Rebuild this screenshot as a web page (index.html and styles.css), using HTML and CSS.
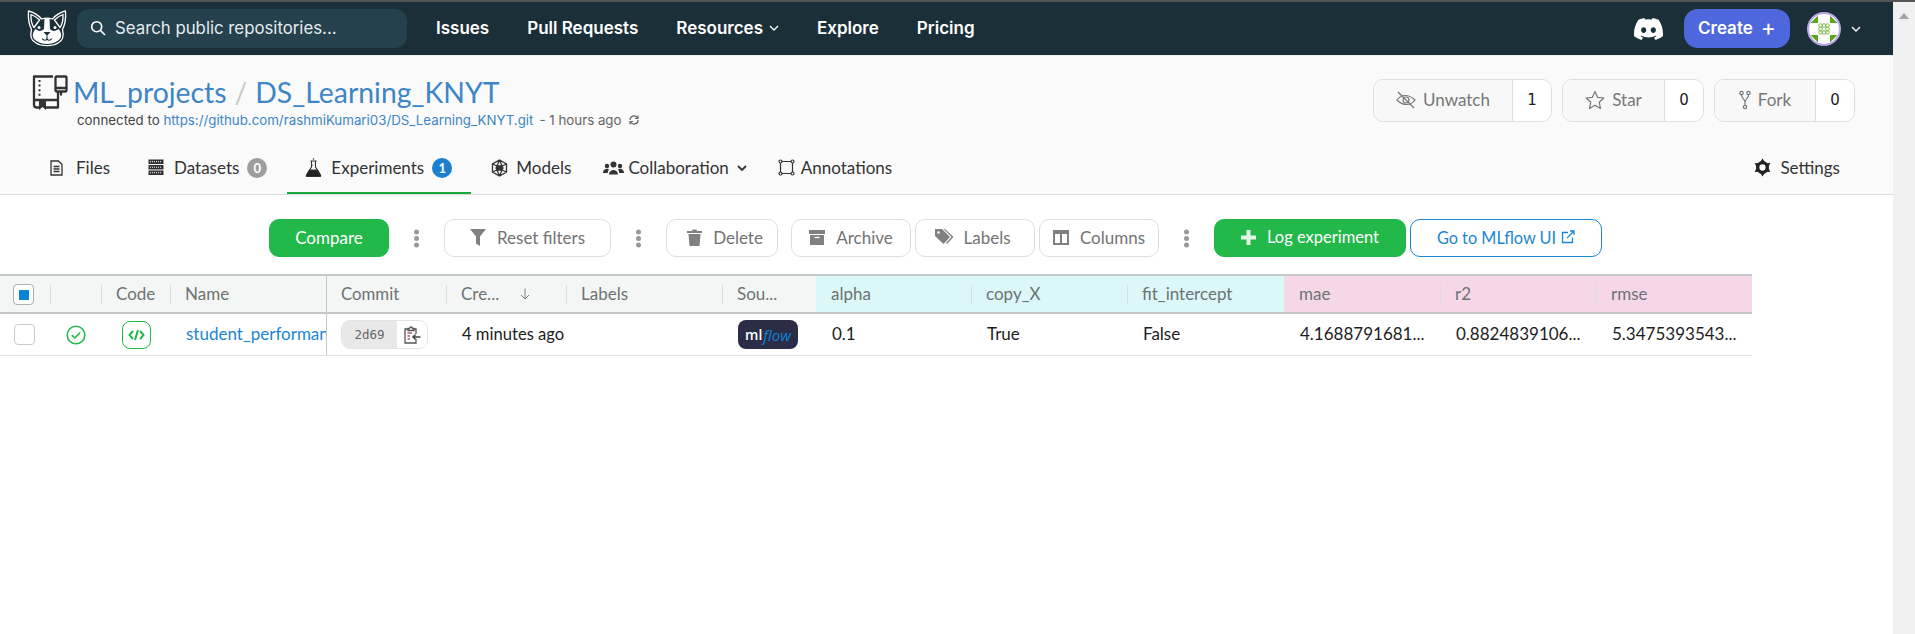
FILE: index.html
```html
<!DOCTYPE html>
<html lang="en-US">
  <head>
    <title>DS_Learning_KNYT - Experiments</title>
    <link rel="stylesheet" href="styles.css">
  </head>
  <body>
    <div id="page">
      <div id="main">
        <nav id="topbar">
          <svg class="logo" viewBox="0 0 40 37" fill="none" stroke="#fff" stroke-width="1.300" stroke-linejoin="round">
            <path d="M1.500 1 C1 8 1.500 14 4.500 19.500 C2.500 27 5 31 9 33 C14 36.500 26 36.500 31 33 C35 31 37.500 27 35.500 19.500 C38.500 14 39 8 38.500 1 C34 2 29 5 25.500 9 C22 8 18 8 14.500 9 C11 5 6 2 1.500 1 Z"/>
            <path d="M4 4.500 C7 5.500 10 7.500 12.500 10 L7 17.500 C4.500 14 3.800 9 4 4.500 Z M36 4.500 C33 5.500 30 7.500 27.500 10 L33 17.500 C35.500 14 36.200 9 36 4.500 Z"/>
            <path d="M17.500 8.500 H22.500 L23 19 C26 22 29 21 31.500 19 C35 23 35.500 28 30.500 31 C25 35 15 35 9.500 31 C4.500 28 5 23 8.500 19 C11 21 14 22 17 19 Z" fill="#fff" stroke="none"/>
            <circle cx="12" cy="17.500" r="1.500" fill="#fff" stroke="none"/>
            <circle cx="28" cy="17.500" r="1.500" fill="#fff" stroke="none"/>
            <path d="M16.500 22 H23.500 L20 26 Z" fill="#1b2f38" stroke="none"/>
            <path d="M20 26 V28.500 M15 28.500 C17 31 19.500 30.500 20 28.500 C20.500 30.500 23 31 25 28.500" stroke="#1b2f38" stroke-width="1.100"/>
          </svg>
          <div class="search">
            <svg class="search-icon" viewBox="0 0 16 16" fill="none" stroke="#fff" stroke-width="1.600"><circle cx="6.700" cy="6.700" r="5"/><path d="M10.400 10.400 L15 15"/></svg>
            <span>Search public repositories...</span>
          </div>
          <a class="nav-link">Issues</a>
          <a class="nav-link">Pull Requests</a>
          <a class="nav-link">Resources <svg class="chev" viewBox="0 0 10 6" fill="none" stroke="#fff" stroke-width="1.300"><path d="M1 1 L5 5 L9 1"/></svg></a>
          <a class="nav-link">Explore</a>
          <a class="nav-link">Pricing</a>
          <div class="top-right">
            <svg class="discord" viewBox="0 0 127.140 96.360"><path fill="#fff" d="M107.700 8.070A105.150 105.150 0 0 0 81.470 0a72.060 72.060 0 0 0-3.360 6.830 97.680 97.680 0 0 0-29.110 0A72.370 72.370 0 0 0 45.640 0a105.890 105.890 0 0 0-26.250 8.090C2.790 32.650-1.710 56.600.54 80.210a105.730 105.730 0 0 0 32.170 16.150 77.700 77.700 0 0 0 6.890-11.110 68.420 68.420 0 0 1-10.850-5.180c.91-.66 1.800-1.340 2.660-2a75.570 75.570 0 0 0 64.320 0c.87.710 1.760 1.390 2.660 2a68.680 68.680 0 0 1-10.870 5.190 77 77 0 0 0 6.890 11.100 105.250 105.250 0 0 0 32.190-16.140c2.640-27.380-4.510-51.110-18.900-72.150ZM42.450 65.690C36.180 65.690 31 60 31 53s5-12.740 11.430-12.740S54 46 53.890 53s-5.050 12.690-11.440 12.690Zm42.240 0C78.410 65.690 73.250 60 73.250 53s5-12.740 11.440-12.740S96.230 46 96.120 53s-5.040 12.690-11.430 12.690Z"/></svg>
            <a class="create">Create <span class="create-plus">+</span></a>
            <div class="avatar">
              <svg viewBox="0 0 30 30"><path d="M1.500 9 L9 1.500 V9 Z M28.500 9 L21 1.500 V9 Z M1.500 21 L9 28.500 V21 Z M28.500 21 L21 28.500 V21 Z" fill="#5aa51e"/><g fill="none" stroke="#78bb3e" stroke-width="1"><circle cx="11.500" cy="11.500" r="1.800"/><circle cx="15" cy="11.500" r="1.800"/><circle cx="18.500" cy="11.500" r="1.800"/><circle cx="11.500" cy="15" r="1.800"/><circle cx="18.500" cy="15" r="1.800"/><circle cx="11.500" cy="18.500" r="1.800"/><circle cx="15" cy="18.500" r="1.800"/><circle cx="18.500" cy="18.500" r="1.800"/></g></svg>
            </div>
            <svg class="chev user-chev" viewBox="0 0 10 6" fill="none" stroke="#fff" stroke-width="1.300"><path d="M1 1 L5 5 L9 1"/></svg>
          </div>
        </nav>

        <header id="repo">
          <div class="repo-top">
            <div class="repo-info">
              <div class="repo-title">
                <svg class="repo-icon" viewBox="0 0 36 35" fill="none" stroke="#333" stroke-width="2.300" stroke-linejoin="round">
                  <path d="M21 1.500 H2 V30 C2 32 3 32.500 5 32.500 H7 M14 32.500 H26 V25 H2 M26 25 V17"/>
                  <path d="M7.500 5 V22" stroke-dasharray="2 2.600" stroke-width="2"/>
                  <rect x="23.500" y="1.500" width="11" height="15" rx="1"/>
                  <path d="M23.500 13 H34.500 M29 17 V20.500"/>
                  <path d="M7 25 H14 V35 L10.500 32 L7 35 Z" fill="#333" stroke="none"/>
                </svg>
                <a class="owner">ML_projects</a>
                <span class="slash">/</span>
                <a class="reponame">DS_Learning_KNYT</a>
              </div>
              <div class="connected">
                <span>connected to&nbsp;</span><a>https://github.com/rashmiKumari03/DS_Learning_KNYT.git</a>
                <span class="ago">- 1 hours ago</span>
                <svg class="sync" viewBox="0 0 12 12" fill="none" stroke="#666" stroke-width="1.200"><path d="M2 6 A4 4 0 0 1 9.500 4 M10 6 A4 4 0 0 1 2.500 8"/><path d="M10 1.500 V4.500 H7 M2 10.500 V7.500 H5"/></svg>
              </div>
            </div>
            <div class="repo-actions">
              <div class="counter-btn">
                <span class="counter-label w-watch">
                  <svg viewBox="0 0 20 20" fill="none" stroke="#777" stroke-width="1.200"><path d="M1 10 C5 4 13 4 19 10 C15 16 7 16 1 10 Z"/><circle cx="10" cy="10" r="3"/><path d="M2 2 L18 18"/></svg>
                  Unwatch</span>
                <span class="counter-num">1</span>
              </div>
              <div class="counter-btn">
                <span class="counter-label w-star">
                  <svg viewBox="0 0 20 20" fill="none" stroke="#777" stroke-width="1.200" stroke-linejoin="round"><path d="M10 1.500 L12.600 7.300 L18.800 8 L14.200 12.200 L15.500 18.400 L10 15.200 L4.500 18.400 L5.800 12.200 L1.200 8 L7.400 7.300 Z"/></svg>
                  Star</span>
                <span class="counter-num">0</span>
              </div>
              <div class="counter-btn fork-btn">
                <span class="counter-label w-fork">
                  <svg viewBox="0 0 12 20" fill="none" stroke="#777" stroke-width="1.200"><circle cx="2.500" cy="3" r="1.700"/><circle cx="9.500" cy="3" r="1.700"/><circle cx="6" cy="17" r="1.700"/><path d="M2.500 5 C2.500 9 6 9 6 12 V15 M9.500 5 C9.500 9 6 9 6 12"/></svg>
                  Fork</span>
                <span class="counter-num">0</span>
              </div>
            </div>
          </div>

          <div class="tabs">
            <a class="tab t-files">
              <svg class="tab-icon" width="13" height="16" viewBox="0 0 13 16" fill="none" stroke="#333" stroke-width="1.300"><path d="M1 1 H8.500 L12 4.500 V15 H1 Z M3.500 6.500 H9.500 M3.500 9 H9.500 M3.500 11.500 H9.500"/></svg>
              Files</a>
            <a class="tab t-datasets">
              <svg class="tab-icon" width="16" height="17" viewBox="0 0 16 17" fill="#333"><rect x="0.500" y="0.500" width="15" height="4.500"/><rect x="0.500" y="6" width="15" height="4.500"/><rect x="0.500" y="11.500" width="15" height="4.500"/><path d="M2 2.700 H14 M2 8.200 H14 M2 13.700 H14" stroke="#fff" stroke-width="1" stroke-dasharray="1 1"/></svg>
              Datasets <span class="badge grey">0</span></a>
            <a class="tab t-exp active">
              <svg class="tab-icon" width="17" height="19" viewBox="0 0 17 19" fill="none" stroke="#333" stroke-width="1.100"><path d="M5.500 3 H11.500 M6.500 3 V9 L1.500 17 C1 18 1.500 18.500 2.500 18.500 H14.500 C15.500 18.500 16 18 15.500 17 L10.500 9 V3"/><path d="M4.500 12 H12.500 L15.500 17.500 C15.500 18 15 18.500 14.500 18.500 H2.500 C2 18.500 1.500 18 1.500 17.500 Z" fill="#222"/><circle cx="8.500" cy="1" r="0.800" fill="#333" stroke="none"/><circle cx="7.800" cy="7" r="0.600" fill="#333" stroke="none"/></svg>
              Experiments <span class="badge blue">1</span></a>
            <a class="tab t-models">
              <svg class="tab-icon" width="17" height="18" viewBox="0 0 17 18" fill="none" stroke="#333" stroke-width="1.300"><path d="M8.500 1 L15.500 5 V13 L8.500 17 L1.500 13 V5 Z M1.500 5 L6 7 M15.500 5 L11 7 M1.500 13 L6 11 M15.500 13 L11 11 M8.500 1 L6 7 M8.500 1 L11 7 M8.500 17 L6 11 M8.500 17 L11 11"/><path d="M6 7 H11 L12 9 L11 11 H6 L5 9 Z" fill="#333"/></svg>
              Models</a>
            <a class="tab t-collab">
              <svg class="tab-icon" width="21" height="14" viewBox="0 0 21 14" fill="#333"><circle cx="10.500" cy="3.500" r="3"/><circle cx="4" cy="5" r="2.200"/><circle cx="17" cy="5" r="2.200"/><path d="M6 13.500 C6 7.500 15 7.500 15 13.500 Z M0 12 C0 7.500 5 7 6 8.500 C5 10 4.800 11 4.800 12 Z M21 12 C21 7.500 16 7 15 8.500 C16 10 16.200 11 16.200 12 Z"/></svg>
              Collaboration <svg class="chev dark" viewBox="0 0 10 6" fill="none" stroke="#333" stroke-width="1.800"><path d="M1 1 L5 5 L9 1"/></svg></a>
            <a class="tab t-annot">
              <svg class="tab-icon" width="17" height="17" viewBox="0 0 17 17" fill="none" stroke="#333" stroke-width="1.200"><path d="M2.500 2.500 H14.500 V14.500 H2.500 Z"/><g fill="#fafafa"><circle cx="2.500" cy="2.500" r="1.500"/><circle cx="14.500" cy="2.500" r="1.500"/><circle cx="2.500" cy="14.500" r="1.500"/><circle cx="14.500" cy="14.500" r="1.500"/></g></svg>
              Annotations</a>
            <a class="tab t-settings">
              <svg class="tab-icon" width="19" height="19" viewBox="0 0 17 17"><circle cx="8.500" cy="8.500" r="4.300" fill="none" stroke="#222" stroke-width="3"/><path d="M8.500 0.500 L10.500 3.500 H6.500 Z M8.500 16.500 L6.500 13.500 H10.500 Z M1.500 4.500 L5 4.700 L3.200 8 Z M15.500 12.500 L12 12.300 L13.800 9 Z M15.500 4.500 L13.800 8 L12 4.700 Z M1.500 12.500 L3.200 9 L5 12.300 Z" fill="#222"/></svg>
              Settings</a>
          </div>
        </header>

        <div class="toolbar">
          <button class="btn green w-compare">Compare</button>
          <span class="dots"></span>
          <button class="btn w-reset">
            <svg width="16" height="17" viewBox="0 0 16 17" fill="#808080"><path d="M0 0 H16 L10 7.500 V17 L6 14.500 V7.500 Z"/></svg>
            Reset filters</button>
          <span class="dots"></span>
          <button class="btn w-delete">
            <svg width="15" height="17" viewBox="0 0 15 17" fill="#808080"><path d="M0 2 H5 L5.500 0.500 H9.500 L10 2 H15 V4 H0 Z M1.500 5 H13.500 L12.500 17 H2.500 Z"/></svg>
            Delete</button>
          <button class="btn w-archive">
            <svg width="16" height="16" viewBox="0 0 16 16" fill="#808080"><path d="M0 1 H16 V5 H0 Z M1 6 H15 V16 H1 Z"/><path d="M5.500 8.500 H10.500" stroke="#fff" stroke-width="1.300"/></svg>
            Archive</button>
          <button class="btn w-labels">
            <svg width="20" height="16" viewBox="0 0 20 16" fill="#808080"><path d="M0 0 H7 L15 8 L8.500 15 L0 7 Z"/><path d="M10 0 L18.500 8 L12 15 L11 14 L16.500 8 L8.500 0 Z"/><circle cx="3.500" cy="3.500" r="1.300" fill="#fff"/></svg>
            Labels</button>
          <button class="btn w-columns">
            <svg width="16" height="15" viewBox="0 0 16 15" fill="none" stroke="#808080" stroke-width="2"><rect x="1" y="1" width="14" height="13"/><path d="M8 1 V14 M1 3 H15"/></svg>
            Columns</button>
          <span class="dots"></span>
          <button class="btn green w-log">
            <svg width="15" height="15" viewBox="0 0 15 15" fill="#e3f5e7"><path d="M5.500 0 H9.500 V5.500 H15 V9.500 H9.500 V15 H5.500 V9.500 H0 V5.500 H5.500 Z"/></svg>
            Log experiment</button>
          <button class="btn outline w-go">Go to MLflow UI
            <svg width="14" height="14" viewBox="0 0 14 14" fill="none" stroke="#1c86d1" stroke-width="1.300"><path d="M7 2.500 H1.500 V12.500 H11.500 V7.500 M6 8 L13 1 M9 1 H13 V5"/></svg>
          </button>
        </div>

        <div class="table">
          <div class="row head">
            <div class="cell"><span class="check checked"></span></div>
            <div class="cell"><span class="hlabel"></span></div>
            <div class="cell"><span class="hlabel">Code</span></div>
            <div class="cell frozen-end"><span class="hlabel">Name</span></div>
            <div class="cell"><span class="hlabel plain commit-head">Commit</span></div>
            <div class="cell"><span class="hlabel">Cre...<svg class="sort" viewBox="0 0 10 12" fill="none" stroke="#808080" stroke-width="1"><path d="M5 0.500 V11 M1 7 L5 11 L9 7"/></svg></span></div>
            <div class="cell"><span class="hlabel">Labels</span></div>
            <div class="cell"><span class="hlabel">Sou...</span></div>
            <div class="cell param"><span class="hlabel plain">alpha</span></div>
            <div class="cell param"><span class="hlabel">copy_X</span></div>
            <div class="cell param"><span class="hlabel">fit_intercept</span></div>
            <div class="cell metric"><span class="hlabel plain">mae</span></div>
            <div class="cell metric"><span class="hlabel">r2</span></div>
            <div class="cell metric"><span class="hlabel">rmse</span></div>
          </div>
          <div class="row body">
            <div class="cell"><span class="check"></span></div>
            <div class="cell center">
              <svg width="20" height="20" viewBox="0 0 20 20" fill="none" stroke="#22b84a" stroke-width="1.600"><circle cx="10" cy="10" r="8.800"/><path d="M5.800 10.200 L8.800 13 L14.200 7.500"/></svg>
            </div>
            <div class="cell center code-cell">
              <span class="code-icon"><svg width="17" height="12" viewBox="0 0 17 12" fill="none" stroke="#22b84a" stroke-width="2"><path d="M5 2 L1.500 6 L5 10 M12 2 L15.500 6 L12 10 M10 1 L7 11"/></svg></span>
            </div>
            <div class="cell frozen-end name"><a>student_performan</a></div>
            <div class="cell commit-cell">
              <span class="commit">
                <span class="sha">2d69</span>
                <span class="copy"><svg width="17" height="18" viewBox="0 0 17 18" fill="none" stroke="#555" stroke-width="1.300"><path d="M4 3 H1 V17 H12 V13 M10 3 H12 V8"/><path d="M4 4.500 V2.500 H5.500 C5.500 0.500 8.500 0.500 8.500 2.500 H10 V4.500 Z" fill="#fff"/><path d="M3.500 7 H8 M3.500 10 H6 M3.500 13 H6" stroke="#b05a8a"/><path d="M16.500 11 H9 M11.500 8.500 L9 11 L11.500 13.500" stroke="#444" stroke-width="1.500"/></svg></span>
              </span>
            </div>
            <div class="cell text date"><span class="val">4 minutes ago</span></div>
            <div class="cell"></div>
            <div class="cell"><span class="mlflow"><b>ml</b><i>flow</i></span></div>
            <div class="cell text"><span class="val">0.1</span></div>
            <div class="cell text"><span class="val">True</span></div>
            <div class="cell text"><span class="val">False</span></div>
            <div class="cell text"><span class="val">4.1688791681...</span></div>
            <div class="cell text"><span class="val">0.8824839106...</span></div>
            <div class="cell text"><span class="val">5.3475393543...</span></div>
          </div>
        </div>
      </div>
      <div id="scrollbar"><span class="arrow-up"></span></div>
    </div>
  </body>
</html>
```
FILE: styles.css
```css
* {
  box-sizing: border-box;
}

html, body {
  margin: 0;
  height: 100%;
  overflow: hidden;
}

body {
  font-family: "Lato", "Liberation Sans", sans-serif;
  background-color: white;
  color: #333;
}

#page {
  display: flex;
  height: 634px;
  border-top: solid 2px #555;
}

#main {
  width: 1893px;
  flex: none;
}

#scrollbar {
  flex: 1;
  background-color: #f1f1f1;
  display: flex;
  justify-content: center;
  padding-top: 11px;
}

.arrow-up {
  width: 0;
  height: 0;
  border-left: 5px solid transparent;
  border-right: 5px solid transparent;
  border-bottom: 6px solid #a3a3a3;
}

/* top bar */
#topbar {
  display: flex;
  align-items: center;
  height: 53px;
  padding-left: 27px;
  background-color: #1b2f38;
  font-family: "Inter", "Liberation Sans", sans-serif;
  color: white;
}

.logo {
  width: 40px;
  height: 37px;
  flex: none;
}

.search {
  display: flex;
  align-items: center;
  width: 330px;
  height: 39px;
  margin-left: 10px;
  padding: 0 0 1px 13px;
  border-radius: 12px;
  background-color: #24414d;
  font-size: 16.800px;
  color: #e6ecef;
}

.search-icon {
  width: 16px;
  height: 16px;
  margin-right: 9px;
}

.nav-link {
  margin-left: 38px;
  padding-bottom: 2px;
  font-size: 17px;
  font-weight: 600;
  white-space: nowrap;
  display: flex;
  align-items: center;
}

.nav-link:nth-of-type(1) {
  margin-left: 29px;
}

.chev {
  width: 10px;
  height: 6px;
  margin-left: 6px;
}

.top-right {
  display: flex;
  align-items: center;
  margin-left: auto;
  padding-right: 32px;
}

.discord {
  width: 29px;
  height: 22px;
  margin-right: 21px;
}

.create {
  display: flex;
  align-items: center;
  justify-content: center;
  width: 106px;
  height: 39px;
  padding-bottom: 1px;
  border-radius: 14px;
  background-color: #4f67dc;
  font-size: 17px;
  font-weight: 600;
}

.create-plus {
  margin-left: 8px;
  font-size: 23px;
  font-weight: 400;
}

.avatar {
  width: 34px;
  height: 34px;
  margin-left: 17px;
  border: solid 2px #b9a5e8;
  border-radius: 50%;
  background-color: white;
  overflow: hidden;
}

.avatar svg {
  display: block;
  width: 30px;
  height: 30px;
}

.user-chev {
  margin-left: 10px;
}

/* repo header */
#repo {
  height: 140px;
  background-color: #fafafa;
  border-top: solid 1px #eee;
  border-bottom: solid 1px #ddd;
}

.repo-top {
  display: flex;
  justify-content: space-between;
  height: 97px;
  padding: 17px 38px 0 32px;
}

.repo-title {
  display: flex;
  align-items: center;
  height: 38px;
}

.repo-icon {
  width: 36px;
  height: 35px;
  margin-right: 5px;
}

.owner, .reponame {
  font-size: 28.400px;
  color: #3d85c6;
}

.slash {
  margin: 0 8px;
  font-size: 28px;
  color: #c8c8c8;
}

.connected {
  display: flex;
  align-items: center;
  margin: 1px 0 0 45px;
  font-family: "Inter", "Liberation Sans", sans-serif;
  font-size: 13.300px;
  color: #444;
  white-space: nowrap;
}

.connected a {
  color: #3d85c6;
}

.ago {
  margin-left: 6px;
  color: #666;
}

.sync {
  width: 12px;
  height: 12px;
  margin-left: 6px;
}

.repo-actions {
  display: flex;
  gap: 10px;
  padding-top: 6px;
}

.counter-btn {
  display: flex;
  height: 43px;
  border: solid 1px #dedede;
  border-radius: 10px;
  overflow: hidden;
  font-size: 17px;
  color: #777;
}

.counter-label {
  display: flex;
  align-items: center;
  justify-content: center;
  gap: 7px;
  padding-bottom: 2px;
  background-color: #f8f8f8;
  border-right: solid 1px #dedede;
}

.counter-label svg {
  height: 20px;
}

.w-watch { width: 139px; }
.w-star { width: 102px; }
.w-fork { width: 101px; }

.counter-num {
  display: flex;
  align-items: center;
  justify-content: center;
  width: 38px;
  padding-bottom: 2px;
  background-color: white;
  font-family: "DejaVu Sans", sans-serif;
  font-size: 15px;
  color: #222;
}

.tabs {
  display: flex;
  align-items: stretch;
  height: 41px;
  font-size: 17px;
}

.tab {
  display: flex;
  align-items: center;
  height: 41px;
  padding-bottom: 12px;
  color: #333;
  white-space: nowrap;
}

.tab-icon {
  margin-right: 8px;
  flex: none;
}

.t-files { margin-left: 50px; }
.t-files .tab-icon { margin-right: 13px; }
.t-datasets { margin-left: 38px; }
.t-datasets .tab-icon { margin-right: 10px; }
.t-models { margin-left: 20px; }
.t-collab { margin-left: 32px; }
.t-collab .tab-icon { margin-right: 4px; }
.t-annot { margin-left: 31px; }
.t-annot .tab-icon { margin-right: 6px; }
.t-settings { margin-left: auto; margin-right: 53px; }

.tab.active {
  width: 184px;
  margin-left: 20px;
  padding-left: 18px;
  padding-bottom: 10px;
  border-bottom: solid 2px #1ba83a;
}

.t-exp .tab-icon { margin-right: 9px; }

.dark {
  margin-left: 8px;
}

.badge {
  display: inline-flex;
  align-items: center;
  justify-content: center;
  width: 20px;
  height: 20px;
  margin-left: 8px;
  border-radius: 50%;
  font-size: 13px;
  font-weight: 700;
  color: white;
}

.badge.grey {
  background-color: #9e9e9e;
}

.badge.blue {
  background-color: #1c7fd0;
}

/* toolbar */
.toolbar {
  display: flex;
  align-items: center;
  height: 79px;
  padding: 24px 0 17px 269px;
}

.btn {
  display: flex;
  align-items: center;
  justify-content: center;
  gap: 11px;
  height: 38px;
  padding: 0 0 2px;
  border: solid 1px #dedede;
  border-radius: 10px;
  background-color: white;
  font-family: "Lato", "Liberation Sans", sans-serif;
  font-size: 17px;
  color: #737373;
  margin-right: 4px;
}

.btn.green {
  background-color: #22b84a;
  border-color: #22b84a;
  color: white;
}

.btn.outline {
  border-color: #1c86d1;
  color: #1c86d1;
  gap: 5px;
}

.w-compare { width: 120px; margin-right: 0; }
.w-reset { width: 167px; margin-right: 0; }
.w-delete { width: 112px; margin-right: 13px; padding-left: 6px; }
.w-archive { width: 120px; }
.w-labels { width: 120px; gap: 8px; padding-right: 4px; }
.w-columns { width: 120px; margin-right: 0; }
.w-log { width: 192px; font-size: 16.500px; }
.w-go { width: 192px; font-size: 16.300px; }

.dots {
  display: flex;
  justify-content: center;
  width: 55px;
}

.dots::before {
  content: "";
  width: 5px;
  height: 5px;
  border-radius: 50%;
  background-color: #999;
  box-shadow: 0 -6.500px 0 #999, 0 6.500px 0 #999;
}

/* table */
.table {
  width: 1752px;
  border-top: solid 2px #c4c8ca;
}

.row {
  display: grid;
  grid-template-columns: 50px 51px 69px 157px 119px 120px 156px 94px 155px 156px 157px 156px 156px 156px;
}

.row.head {
  height: 38px;
  border-bottom: solid 2px #c4c8ca;
  background-color: #f4f6f5;
  font-size: 17px;
  color: #6d7373;
}

.row.body {
  height: 42px;
  border-bottom: solid 1px #dfe2e2;
  font-size: 17px;
  color: #1d1d1d;
}

.cell {
  display: flex;
  align-items: center;
  min-width: 0;
  overflow: hidden;
  white-space: nowrap;
}

.cell.center {
  justify-content: center;
}

.code-cell {
  padding-left: 2px;
}

.row.body .cell:first-child {
  padding-left: 14px;
}

.row.head .cell:first-child {
  padding-left: 13px;
}

.frozen-end {
  border-right: solid 1px #c4c8ca;
}

.hlabel {
  display: flex;
  align-items: center;
  height: 19px;
  padding: 0 0 1px 14px;
  border-left: solid 1px #d9dcdd;
  width: 100%;
}

.hlabel.plain {
  border-left-color: transparent;
}

.commit-head {
  padding-left: 13px;
  font-size: 16.800px;
}

.param {
  background-color: #dcf7f7;
}

.metric {
  background-color: #f5d7e8;
}

.sort {
  width: 10px;
  height: 12px;
  margin-left: 21px;
}

.check {
  display: block;
  width: 21px;
  height: 21px;
  border: solid 1px #c9cccd;
  border-radius: 4px;
  background-color: white;
}

.check.checked {
  padding: 5px;
  border-color: #aab0b3;
}

.check.checked::before {
  content: "";
  display: block;
  width: 10px;
  height: 10px;
  background-color: #0a84d6;
}

.code-icon {
  display: flex;
  align-items: center;
  justify-content: center;
  width: 29px;
  height: 28px;
  border: solid 1.500px #22b84a;
  border-radius: 8px;
}

.name a {
  padding: 0 0 2px 16px;
  color: #1c86d1;
}

.text {
  padding-left: 16px;
}

.date {
  font-size: 16.600px;
}

.val {
  padding-bottom: 2px;
}

.commit-cell {
  padding-left: 14px;
}

.commit {
  display: flex;
  width: 87px;
  height: 29px;
  border: solid 1px #e2e2e2;
  border-radius: 9px;
  overflow: hidden;
}

.sha {
  display: flex;
  align-items: center;
  justify-content: center;
  width: 55px;
  background-color: #e8e8e8;
  font-family: "DejaVu Sans Mono", monospace;
  font-size: 12.500px;
  color: #666;
}

.copy {
  display: flex;
  align-items: center;
  justify-content: center;
  flex: 1;
  background-color: white;
}

.mlflow {
  display: flex;
  align-items: center;
  justify-content: center;
  width: 60px;
  height: 29px;
  margin-left: 16px;
  border-radius: 8px;
  background-color: #2a2d45;
  font-family: "Open Sans", sans-serif;
  font-size: 14px;
}

.mlflow b {
  color: white;
  font-weight: 600;
}

.mlflow i {
  color: #0a84d6;
  font-size: 15px;
  margin-left: 1px;
}
```
